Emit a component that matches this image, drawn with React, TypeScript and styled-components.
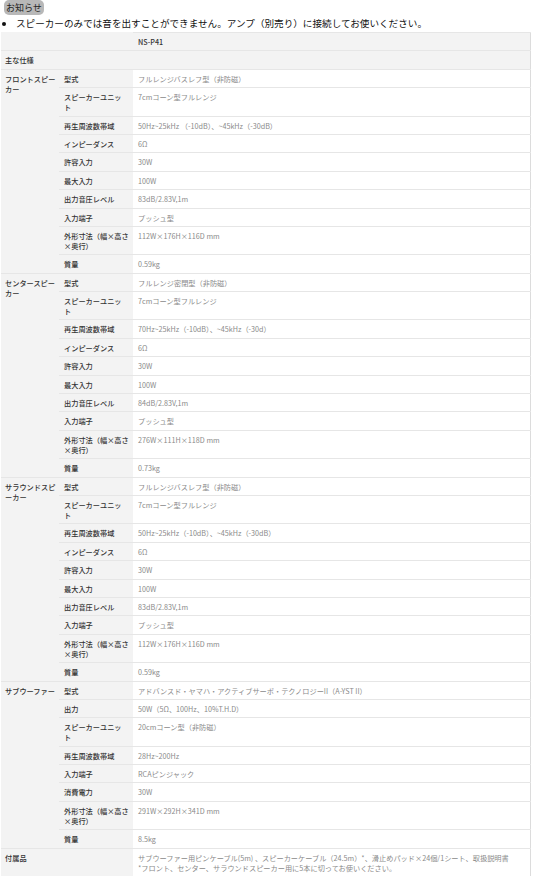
import styled, { createGlobalStyle } from 'styled-components'

const GlobalStyle = createGlobalStyle`
    body {
        margin: 0;
        background: #ffffff;
        font-family: "Noto Sans CJK JP", "Liberation Sans", sans-serif;
    }
`

const Page = styled.div`
    padding: 0 2px 0 1px;
    width: 533px;
    box-sizing: border-box;
`

const Badge = styled.div`
    width: fit-content;
    margin-left: 3px;
    padding: 0 2px;
    height: 15px;
    line-height: 15px;
    font-size: 9px;
    color: #222;
    background: #b8b8b8;
    border-radius: 5px;
`

const Notice = styled.ul`
    margin: 0;
    padding: 0 0 0 15px;
    font-size: 9.6px;
    line-height: 16px;
    color: #111;
    list-style: disc;
`

const Table = styled.table`
    margin-top: 1px;
    width: 100%;
    border-collapse: collapse;
    table-layout: fixed;
    font-size: 7.2px;
    line-height: 10px;
    border-right: 1px solid #dcdcdc;
`

const Th = styled.th<{ $top?: boolean, $wide?: boolean }>`
    background: #f3f3f3;
    color: #333;
    font-weight: 500;
    text-align: left;
    vertical-align: top;
    padding: 4px ${p => p.$wide ? 6 : 2}px 3.4px ${p => p.$wide ? 5 : 4}px;
    line-break: anywhere;
    border-top: 1px solid ${p => p.$top ? '#f3f3f3' : '#e6e6e6'};
`

const Td = styled.td<{ $head?: boolean }>`
    background: ${p => p.$head ? '#f3f3f3' : '#ffffff'};
    color: ${p => p.$head ? '#333' : '#8a8a8a'};
    font-weight: ${p => p.$head ? 500 : 400};
    vertical-align: top;
    padding: 4px 5px 3.4px;
    border-top: 1px solid #e6e6e6;
`

const Line = styled.span`
    display: block;
    white-space: nowrap;
`

type Spec = [string, string]

type Group = {
    name: string,
    specs: Spec[]
}

const groups: Group[] = [
    {
        name: 'フロントスピーカー',
        specs: [
            ['型式', 'フルレンジバスレフ型（非防磁）'],
            ['スピーカーユニット', '7cmコーン型フルレンジ'],
            ['再生周波数帯域', '50Hz~25kHz （-10dB）、~45kHz（-30dB）'],
            ['インピーダンス', '6Ω'],
            ['許容入力', '30W'],
            ['最大入力', '100W'],
            ['出力音圧レベル', '83dB/2.83V,1m'],
            ['入力端子', 'プッシュ型'],
            ['外形寸法（幅×高さ\n×奥行）', '112W×176H×116D mm'],
            ['質量', '0.59kg']
        ]
    },
    {
        name: 'センタースピーカー',
        specs: [
            ['型式', 'フルレンジ密閉型（非防磁）'],
            ['スピーカーユニット', '7cmコーン型フルレンジ'],
            ['再生周波数帯域', '70Hz~25kHz（-10dB）、~45kHz（-30d）'],
            ['インピーダンス', '6Ω'],
            ['許容入力', '30W'],
            ['最大入力', '100W'],
            ['出力音圧レベル', '84dB/2.83V,1m'],
            ['入力端子', 'プッシュ型'],
            ['外形寸法（幅×高さ\n×奥行）', '276W×111H×118D mm'],
            ['質量', '0.73kg']
        ]
    },
    {
        name: 'サラウンドスピーカー',
        specs: [
            ['型式', 'フルレンジバスレフ型（非防磁）'],
            ['スピーカーユニット', '7cmコーン型フルレンジ'],
            ['再生周波数帯域', '50Hz~25kHz（-10dB）、~45kHz（-30dB）'],
            ['インピーダンス', '6Ω'],
            ['許容入力', '30W'],
            ['最大入力', '100W'],
            ['出力音圧レベル', '83dB/2.83V,1m'],
            ['入力端子', 'プッシュ型'],
            ['外形寸法（幅×高さ\n×奥行）', '112W×176H×116D mm'],
            ['質量', '0.59kg']
        ]
    },
    {
        name: 'サブウーファー',
        specs: [
            ['型式', 'アドバンスド・ヤマハ・アクティブサーボ・テクノロジーII（A-YST II）'],
            ['出力', '50W（5Ω、100Hz、10%T.H.D）'],
            ['スピーカーユニット', '20cmコーン型（非防磁）'],
            ['再生周波数帯域', '28Hz~200Hz'],
            ['入力端子', 'RCAピンジャック'],
            ['消費電力', '30W'],
            ['外形寸法（幅×高さ\n×奥行）', '291W×292H×341D mm'],
            ['質量', '8.5kg']
        ]
    }
]

// text with a forced break keeps the source's wrapping, one line per part
function Lines({ text }: { text: string }) {
    if (!text.includes('\n')) return <>{text}</>
    return (
        <>
            {text.split('\n').map((part, i) => (
                <Line key={i}>{part}</Line>
            ))}
        </>
    )
}

export default function App() {
    return (
        <Page>
            <GlobalStyle />
            <Badge>お知らせ</Badge>
            <Notice>
                <li>スピーカーのみでは音を出すことができません。アンプ（別売り）に接続してお使いください。</li>
            </Notice>
            <Table>
                <colgroup>
                    <col style={{ width: 58 }} />
                    <col style={{ width: 74 }} />
                    <col />
                </colgroup>
                <tbody>
                    <tr>
                        <Th colSpan={2} $top></Th>
                        <Td $head>NS-P41</Td>
                    </tr>
                    <tr>
                        <Th colSpan={3}>主な仕様</Th>
                    </tr>
                    {groups.map(group => group.specs.map(([label, value], i) => (
                        <tr key={group.name + i}>
                            {i === 0 && (
                                <Th rowSpan={group.specs.length}>{group.name}</Th>
                            )}
                            <Th $wide><Lines text={label} /></Th>
                            <Td>{value}</Td>
                        </tr>
                    )))}
                    <tr>
                        <Th colSpan={2}>付属品</Th>
                        <Td>
                            <Lines text={'サブウーファー用ピンケーブル(5m) 、スピーカーケーブル（24.5m）*、滑止めパッド×24個/1シート、取扱説明書\n*フロント、センター、サラウンドスピーカー用に5本に切ってお使いください。'} />
                        </Td>
                    </tr>
                </tbody>
            </Table>
        </Page>
    )
}
